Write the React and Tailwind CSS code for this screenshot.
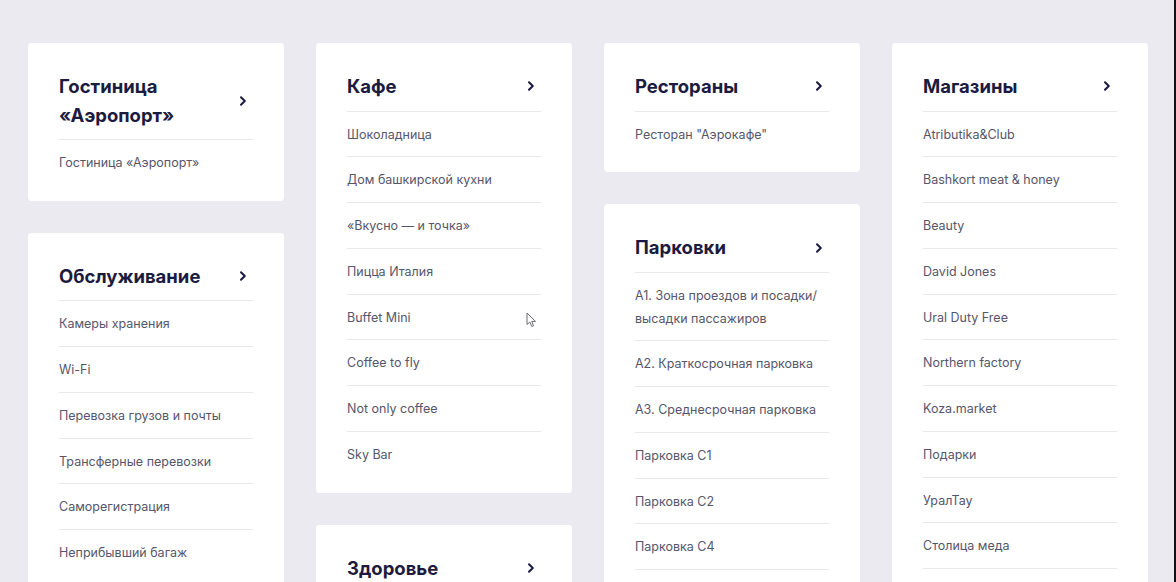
import React from "react";

const columns = [
  [
    { title: "Гостиница «Аэропорт»", items: [["Гостиница «Аэропорт»"]] },
    {
      title: "Обслуживание",
      items: [
        ["Камеры хранения"],
        ["Wi-Fi"],
        ["Перевозка грузов и почты"],
        ["Трансферные перевозки"],
        ["Саморегистрация"],
        ["Неприбывший багаж"],
      ],
    },
  ],
  [
    {
      title: "Кафе",
      items: [
        ["Шоколадница"],
        ["Дом башкирской кухни"],
        ["«Вкусно — и точка»"],
        ["Пицца Италия"],
        ["Buffet Mini"],
        ["Coffee to fly"],
        ["Not only coffee"],
        ["Sky Bar"],
      ],
    },
    { title: "Здоровье", items: [["Аптека"]] },
  ],
  [
    { title: "Рестораны", items: [["Ресторан \"Аэрокафе\""]] },
    {
      title: "Парковки",
      items: [
        ["А1. Зона проездов и посадки/", "высадки пассажиров"],
        ["А2. Краткосрочная парковка"],
        ["А3. Среднесрочная парковка"],
        ["Парковка C1"],
        ["Парковка C2"],
        ["Парковка C4"],
        ["Парковка P1"],
      ],
    },
  ],
  [
    {
      title: "Магазины",
      items: [
        ["Atributika&Club"],
        ["Bashkort meat & honey"],
        ["Beauty"],
        ["David Jones"],
        ["Ural Duty Free"],
        ["Northern factory"],
        ["Koza.market"],
        ["Подарки"],
        ["УралТау"],
        ["Столица меда"],
        ["Сувениры"],
      ],
    },
  ],
];

function Chevron() {
  return (
    <svg width="20" height="20" viewBox="0 0 20 20" className="shrink-0">
      <path
        d="M8 6.2 L11.8 10 L8 13.8"
        fill="none"
        stroke="#1c1b3f"
        strokeWidth="2"
        strokeLinecap="round"
        strokeLinejoin="round"
      />
    </svg>
  );
}

function Card({ title, items }) {
  return (
    <div className="bg-white rounded-[4px] px-[31px] pb-[16px]">
      <div className="flex items-center justify-between gap-4 pt-[29px] pb-[10px] border-b border-[#e7e7ed]">
        <h2 className="text-[18.5px] leading-[28.5px] font-bold text-[#1c1b3f] max-w-[150px]">
          {title}
        </h2>
        <Chevron />
      </div>
      <ul>
        {items.map((lines, i) => (
          <li
            key={i}
            className={
              "pt-[12px] pb-[10px] text-[12.5px] leading-[22.75px] text-[#56566b] " +
              (i < items.length - 1 ? "border-b border-[#e7e7ed]" : "")
            }
          >
            {lines.map((l, j) => (
              <React.Fragment key={j}>
                {j > 0 && <br />}
                {l}
              </React.Fragment>
            ))}
          </li>
        ))}
      </ul>
    </div>
  );
}

export default function App() {
  return (
    <div
      className="relative h-[582px] w-full overflow-hidden bg-[#ebeaf0] border-r-2 border-[#111]"
      style={{ fontFamily: "Inter, 'Noto Sans', sans-serif" }}
    >
      <div className="grid grid-cols-4 gap-8 items-start pl-[28px] pr-[26px] pt-[43px]">
        {columns.map((col, ci) => (
          <div key={ci} className="flex flex-col gap-8">
            {col.map((card, k) => (
              <Card key={k} {...card} />
            ))}
          </div>
        ))}
      </div>
      <svg
        className="absolute left-[526px] top-[312px]"
        width="12"
        height="16"
        viewBox="0 0 12 16"
      >
        <path
          d="M1 1 L1 12.5 L3.8 10 L5.8 14.5 L7.6 13.7 L5.7 9.4 L9.5 9.4 Z"
          fill="#fff"
          stroke="#6b6b75"
          strokeWidth="1"
          strokeLinejoin="round"
        />
      </svg>
    </div>
  );
}
